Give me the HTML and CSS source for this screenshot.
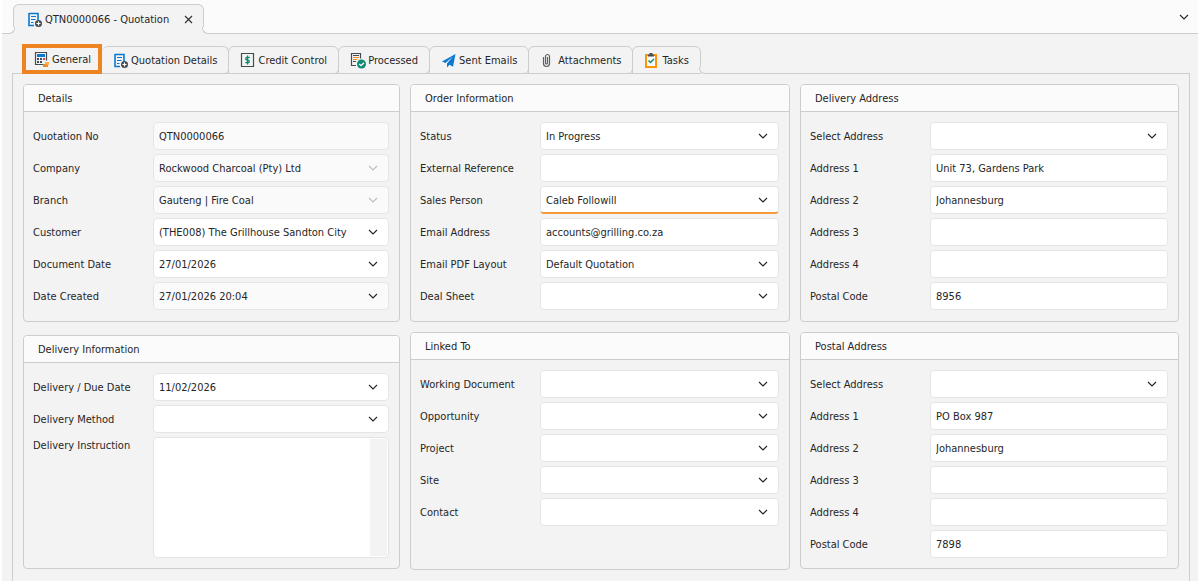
FILE: index.html
```html
<!DOCTYPE html>
<html lang="en">
<head>
    <meta charset="UTF-8">
    <meta name="viewport" content="width=device-width, initial-scale=1.0">
    <title>QTN0000066 - Quotation</title>
    <link rel="stylesheet" href="styles.css">
</head>
<body>
    <!-- Shared icons -->
    <svg width="0" height="0" class="sprite" aria-hidden="true">
        <symbol id="chevron" viewBox="0 0 10 6">
            <path d="M1 1l4 4 4-4" fill="none" stroke="currentColor" stroke-width="1.1"/>
        </symbol>
        <symbol id="doc-add" viewBox="0 0 16 16">
            <path d="M2 1.5h9v7M2 1v12.5h5" fill="none" stroke="#0b78d0" stroke-width="1.6"/>
            <path d="M4 4.5h5M4 7.5h4.500M4 10.500h2.500" stroke="#0b78d0" stroke-width="1.2"/>
            <circle cx="11.500" cy="11.500" r="3.500" fill="#454c52"/>
            <path d="M11.500 9.500v4M9.500 11.500h4" stroke="#fff" stroke-width="1.2"/>
        </symbol>
    </svg>

    <div class="app">
        <header class="doc-bar">
            <div class="doc-tab">
                <svg class="icon"><use href="#doc-add"/></svg>
                <span>QTN0000066 - Quotation</span>
                <button type="button" class="close" aria-label="Close">
                    <svg width="9" height="9" viewBox="0 0 9 9"><path d="M1 1l7 7M8 1L1 8" stroke="#333" stroke-width="1.2"/></svg>
                </button>
            </div>
            <button type="button" class="doc-menu" aria-label="Open documents">
                <svg class="chevron"><use href="#chevron"/></svg>
            </button>
        </header>

        <nav class="tabs" role="tablist">
            <button type="button" role="tab" class="tab active" aria-selected="true">
                <svg class="icon" viewBox="0 0 16 16">
                    <path d="M9 12.500H1.500v-12h11v8" fill="none" stroke="#454c52" stroke-width="1.200"/>
                    <path fill="#0b78d0" d="M3 2h8v3H3z"/>
                    <path fill="#454c52" d="M3 6h2v2H3zM6 6h2v2H6zM3 9h2v2H3zM6 9h2v2H6z"/>
                    <path fill="#d9434e" d="M9 6h2v2H9z"/>
                    <path fill="#ffb04a" d="M11 10h4v3h-4z"/>
                    <path fill="#f58a1f" d="M9 12h3v1h2v2H9z"/>
                </svg>
                General
            </button>
            <button type="button" role="tab" class="tab">
                <svg class="icon"><use href="#doc-add"/></svg>
                Quotation Details
            </button>
            <button type="button" role="tab" class="tab">
                <svg class="icon" viewBox="0 0 16 16">
                    <path d="M1.500 .5h12v13h-12z" fill="none" stroke="#454c52" stroke-width="1.200"/>
                    <path d="M9.700 4.500H6.500q-1.500 1.200 0 2.400l2 .4q1.500 1.200 0 2.400H5.300M7.500 2.500v9" fill="none" stroke="#118a72" stroke-width="1.300"/>
                </svg>
                Credit Control
            </button>
            <button type="button" role="tab" class="tab">
                <svg class="icon" viewBox="0 0 16 16">
                    <path d="M6 12.500H1.500v-12h9v5" fill="none" stroke="#454c52" stroke-width="1.200"/>
                    <path d="M3 2.500h6M3 8.500h3" stroke="#454c52"/>
                    <path d="M3 4.500h6M3 6.500h4" stroke="#f58a1f"/>
                    <circle cx="11.500" cy="11" r="4.500" fill="#118a72"/>
                    <path d="M9.300 11l1.700 1.700 3-3" fill="none" stroke="#fff" stroke-width="1.300"/>
                </svg>
                Processed
            </button>
            <button type="button" role="tab" class="tab">
                <svg class="icon" viewBox="0 0 16 16">
                    <path fill="#0b78d0" d="M14.500 1L1 8.500l3.500 1.500L12 3.500 6 10.500v4l2.500-2.800 3.500 2z"/>
                </svg>
                Sent Emails
            </button>
            <button type="button" role="tab" class="tab">
                <svg class="icon" viewBox="0 0 16 16">
                    <path d="M3.500 4v6.500a3 3 0 0 0 6 0v-7a2 2 0 0 0-4 0v6.500a1 1 0 0 0 2 0V4" fill="none" stroke="#5a6167" stroke-width="1.200"/>
                </svg>
                Attachments
            </button>
            <button type="button" role="tab" class="tab last">
                <svg class="icon" viewBox="0 0 16 16">
                    <path d="M4.500 2H2v12h10V2H9.500" fill="#fff" stroke="#ff9408" stroke-width="2"/>
                    <path fill="#454c52" d="M4 1.500h1.500V0h3v1.500H10v2H4z"/>
                    <path d="M4.500 7.500l2 2 3.500-3.500" fill="none" stroke="#118a72" stroke-width="1.500"/>
                </svg>
                Tasks
            </button>
        </nav>

        <main class="workspace">
            <div class="column column-wide">
                <section class="panel">
                    <h2>Details</h2>
                    <div class="fields">
                        <div class="row">
                            <label for="quotation-no">Quotation No</label>
                            <input type="text" id="quotation-no" class="readonly" value="QTN0000066" readonly>
                        </div>
                        <div class="row">
                            <label for="company">Company</label>
                            <div class="combo disabled">
                                <select id="company" disabled><option>Rockwood Charcoal (Pty) Ltd</option></select>
                                <svg class="chevron"><use href="#chevron"/></svg>
                            </div>
                        </div>
                        <div class="row">
                            <label for="branch">Branch</label>
                            <div class="combo disabled">
                                <select id="branch" disabled><option>Gauteng | Fire Coal</option></select>
                                <svg class="chevron"><use href="#chevron"/></svg>
                            </div>
                        </div>
                        <div class="row">
                            <label for="customer">Customer</label>
                            <div class="combo">
                                <select id="customer"><option>(THE008) The Grillhouse Sandton City</option></select>
                                <svg class="chevron"><use href="#chevron"/></svg>
                            </div>
                        </div>
                        <div class="row">
                            <label for="document-date">Document Date</label>
                            <div class="combo">
                                <select id="document-date"><option>27/01/2026</option></select>
                                <svg class="chevron"><use href="#chevron"/></svg>
                            </div>
                        </div>
                        <div class="row">
                            <label for="date-created">Date Created</label>
                            <div class="combo">
                                <select id="date-created" class="readonly"><option>27/01/2026 20:04</option></select>
                                <svg class="chevron"><use href="#chevron"/></svg>
                            </div>
                        </div>
                    </div>
                </section>

                <section class="panel">
                    <h2>Delivery Information</h2>
                    <div class="fields">
                        <div class="row">
                            <label for="due-date">Delivery / Due Date</label>
                            <div class="combo">
                                <select id="due-date"><option>11/02/2026</option></select>
                                <svg class="chevron"><use href="#chevron"/></svg>
                            </div>
                        </div>
                        <div class="row">
                            <label for="delivery-method">Delivery Method</label>
                            <div class="combo">
                                <select id="delivery-method"><option></option></select>
                                <svg class="chevron"><use href="#chevron"/></svg>
                            </div>
                        </div>
                        <div class="row row-top">
                            <label for="delivery-instruction">Delivery Instruction</label>
                            <div class="memo">
                                <textarea id="delivery-instruction"></textarea>
                                <div class="memo-track"></div>
                            </div>
                        </div>
                    </div>
                </section>
            </div>

            <div class="column">
                <section class="panel">
                    <h2>Order Information</h2>
                    <div class="fields">
                        <div class="row">
                            <label for="status">Status</label>
                            <div class="combo">
                                <select id="status"><option>In Progress</option></select>
                                <svg class="chevron"><use href="#chevron"/></svg>
                            </div>
                        </div>
                        <div class="row">
                            <label for="external-reference">External Reference</label>
                            <input type="text" id="external-reference">
                        </div>
                        <div class="row">
                            <label for="sales-person">Sales Person</label>
                            <div class="combo focused">
                                <select id="sales-person"><option>Caleb Followill</option></select>
                                <svg class="chevron"><use href="#chevron"/></svg>
                            </div>
                        </div>
                        <div class="row">
                            <label for="email-address">Email Address</label>
                            <input type="text" id="email-address" value="accounts@grilling.co.za">
                        </div>
                        <div class="row">
                            <label for="email-layout">Email PDF Layout</label>
                            <div class="combo">
                                <select id="email-layout"><option>Default Quotation</option></select>
                                <svg class="chevron"><use href="#chevron"/></svg>
                            </div>
                        </div>
                        <div class="row">
                            <label for="deal-sheet">Deal Sheet</label>
                            <div class="combo">
                                <select id="deal-sheet"><option></option></select>
                                <svg class="chevron"><use href="#chevron"/></svg>
                            </div>
                        </div>
                    </div>
                </section>

                <section class="panel grow">
                    <h2>Linked To</h2>
                    <div class="fields">
                        <div class="row">
                            <label for="working-document">Working Document</label>
                            <div class="combo">
                                <select id="working-document"><option></option></select>
                                <svg class="chevron"><use href="#chevron"/></svg>
                            </div>
                        </div>
                        <div class="row">
                            <label for="opportunity">Opportunity</label>
                            <div class="combo">
                                <select id="opportunity"><option></option></select>
                                <svg class="chevron"><use href="#chevron"/></svg>
                            </div>
                        </div>
                        <div class="row">
                            <label for="project">Project</label>
                            <div class="combo">
                                <select id="project"><option></option></select>
                                <svg class="chevron"><use href="#chevron"/></svg>
                            </div>
                        </div>
                        <div class="row">
                            <label for="site">Site</label>
                            <div class="combo">
                                <select id="site"><option></option></select>
                                <svg class="chevron"><use href="#chevron"/></svg>
                            </div>
                        </div>
                        <div class="row">
                            <label for="contact">Contact</label>
                            <div class="combo">
                                <select id="contact"><option></option></select>
                                <svg class="chevron"><use href="#chevron"/></svg>
                            </div>
                        </div>
                    </div>
                </section>
            </div>

            <div class="column">
                <section class="panel">
                    <h2>Delivery Address</h2>
                    <div class="fields">
                        <div class="row">
                            <label for="delivery-select">Select Address</label>
                            <div class="combo">
                                <select id="delivery-select"><option></option></select>
                                <svg class="chevron"><use href="#chevron"/></svg>
                            </div>
                        </div>
                        <div class="row">
                            <label for="delivery-1">Address 1</label>
                            <input type="text" id="delivery-1" value="Unit 73, Gardens Park">
                        </div>
                        <div class="row">
                            <label for="delivery-2">Address 2</label>
                            <input type="text" id="delivery-2" value="Johannesburg">
                        </div>
                        <div class="row">
                            <label for="delivery-3">Address 3</label>
                            <input type="text" id="delivery-3">
                        </div>
                        <div class="row">
                            <label for="delivery-4">Address 4</label>
                            <input type="text" id="delivery-4">
                        </div>
                        <div class="row">
                            <label for="delivery-code">Postal Code</label>
                            <input type="text" id="delivery-code" value="8956">
                        </div>
                    </div>
                </section>

                <section class="panel">
                    <h2>Postal Address</h2>
                    <div class="fields">
                        <div class="row">
                            <label for="postal-select">Select Address</label>
                            <div class="combo">
                                <select id="postal-select"><option></option></select>
                                <svg class="chevron"><use href="#chevron"/></svg>
                            </div>
                        </div>
                        <div class="row">
                            <label for="postal-1">Address 1</label>
                            <input type="text" id="postal-1" value="PO Box 987">
                        </div>
                        <div class="row">
                            <label for="postal-2">Address 2</label>
                            <input type="text" id="postal-2" value="Johannesburg">
                        </div>
                        <div class="row">
                            <label for="postal-3">Address 3</label>
                            <input type="text" id="postal-3">
                        </div>
                        <div class="row">
                            <label for="postal-4">Address 4</label>
                            <input type="text" id="postal-4">
                        </div>
                        <div class="row">
                            <label for="postal-code">Postal Code</label>
                            <input type="text" id="postal-code" value="7898">
                        </div>
                    </div>
                </section>
            </div>
        </main>
    </div>
</body>
</html>
```
FILE: styles.css
```css
* {
    box-sizing: border-box;
}
body {
    margin: 0;
    background-color: #fff;
    color: #262626;
    font-family: Tahoma, "DejaVu Sans Condensed", "Noto Sans", sans-serif;
    font-size: 11px;
    line-height: 14px;
}
button, input, select, textarea {
    font: inherit;
    color: inherit;
}
button {
    padding: 0;
    border: none;
    background: none;
    cursor: pointer;
}
.sprite {
    position: absolute;
}
.icon {
    width: 16px;
    height: 16px;
    flex: none;
}
.chevron {
    width: 10px;
    height: 6px;
    display: block;
}
.app {
    display: flex;
    flex-direction: column;
    min-height: 100vh;
    margin-left: 2px;
    background-color: #f3f3f3;
}

/* Open document strip */
.doc-bar {
    display: flex;
    align-items: flex-end;
    justify-content: space-between;
    height: 34px;
    padding: 0 9px 0 11px;
    background-color: #fbfbfb;
    border-bottom: 1px solid #cdcdcd;
}
.doc-tab {
    position: relative;
    display: flex;
    align-items: center;
    gap: 2px;
    height: 30px;
    margin-bottom: -1px;
    padding: 0 10px 0 13px;
    background-color: #f3f3f3;
    border: 1px solid #cdcdcd;
    border-bottom: none;
    border-radius: 6px 6px 0 0;
}
.doc-tab::before,
.doc-tab::after,
.tab.last::after {
    content: "";
    position: absolute;
    bottom: 0;
    width: 6px;
    height: 6px;
    border-bottom: 1px solid #cdcdcd;
}
.doc-tab::before {
    left: -6px;
    background-color: #fbfbfb;
    border-right: 1px solid #cdcdcd;
    border-bottom-right-radius: 6px;
    box-shadow: 2px 2px 0 #f3f3f3;
}
.doc-tab::after {
    right: -6px;
    background-color: #fbfbfb;
    border-left: 1px solid #cdcdcd;
    border-bottom-left-radius: 6px;
    box-shadow: -2px 2px 0 #f3f3f3;
}
.close {
    display: flex;
    margin-left: 13px;
}
.doc-menu {
    align-self: center;
}

/* Section tabs */
.tabs {
    display: flex;
    align-items: flex-end;
    margin: 10px 10px -1px 20px;
    position: relative;
}
.tab {
    position: relative;
    display: flex;
    align-items: center;
    gap: 2px;
    height: 28px;
    margin-left: -1px;
    padding: 1px 11px 0;
    border: 1px solid #cdcdcd;
    border-radius: 6px 6px 5px 0;
    white-space: nowrap;
}
.tab.active {
    height: 30px;
    margin-left: 0;
    padding: 1px 7px 0 8px;
    border: 4px solid #ee8322;
    border-radius: 0;
}
.tab.active + .tab {
    border-left: none;
    margin-left: 0;
}
.tab.last {
    border-bottom-right-radius: 0;
}
.tab.last::after {
    right: -6px;
    bottom: -1px;
    background-color: #f3f3f3;
    border-left: 1px solid #cdcdcd;
    border-bottom-left-radius: 6px;
    box-shadow: -2px 0 0 #f3f3f3;
}

/* Form area */
.workspace {
    flex: 1;
    display: grid;
    grid-template-columns: 377fr 380fr 379fr;
    align-items: start;
    gap: 10px;
    margin: 0 8px 0 10px;
    padding: 10px 10px 11px;
    border: 1px solid #cdcdcd;
    border-bottom: none;
}
.column {
    display: flex;
    flex-direction: column;
    gap: 10px;
    min-width: 0;
}
.column-wide {
    gap: 13px;
}
.column:nth-child(2) {
    align-self: stretch;
}
.grow {
    flex: 1;
}
.panel {
    border: 1px solid #cdcdcd;
    border-radius: 4px;
    overflow: hidden;
}
.panel h2 {
    margin: 0;
    padding: 7px 14px 5px;
    background-color: #fbfbfb;
    border-bottom: 1px solid #cdcdcd;
    font-size: 11px;
    font-weight: normal;
    line-height: 14px;
}
.fields {
    display: flex;
    flex-direction: column;
    gap: 4px;
    padding: 10px 10px 11px 9px;
}
.panel:last-child .fields {
    padding-bottom: 10px;
}
.row {
    display: grid;
    grid-template-columns: 120px minmax(0, 1fr);
    align-items: center;
}
.row label {
    padding-top: 2px;
}
.row-top {
    align-items: start;
}
.combo {
    position: relative;
}
input, select {
    display: block;
    width: 100%;
    height: 28px;
    padding: 0 5px;
    background-color: #fff;
    border: 1px solid #e5e5e5;
    border-radius: 4px;
    appearance: none;
    outline: none;
}
select {
    padding: 2px 26px 0 5px;
}
select:disabled,
.readonly {
    background-color: #fafafa;
    color: #262626;
    opacity: 1;
}
.combo .chevron {
    position: absolute;
    top: 11px;
    right: 11px;
    pointer-events: none;
}
.combo.disabled .chevron {
    color: #bdbdbd;
}
.combo.focused select {
    border-bottom: 2px solid #f79a3e;
}
.memo {
    display: flex;
    height: 121px;
    padding: 1px;
    background-color: #fff;
    border: 1px solid #e5e5e5;
    border-radius: 4px;
}
.memo textarea {
    flex: 1;
    min-width: 0;
    padding: 4px;
    border: none;
    outline: none;
    resize: none;
    background: none;
}
.memo-track {
    width: 17px;
    background-color: #f3f3f3;
}
```
